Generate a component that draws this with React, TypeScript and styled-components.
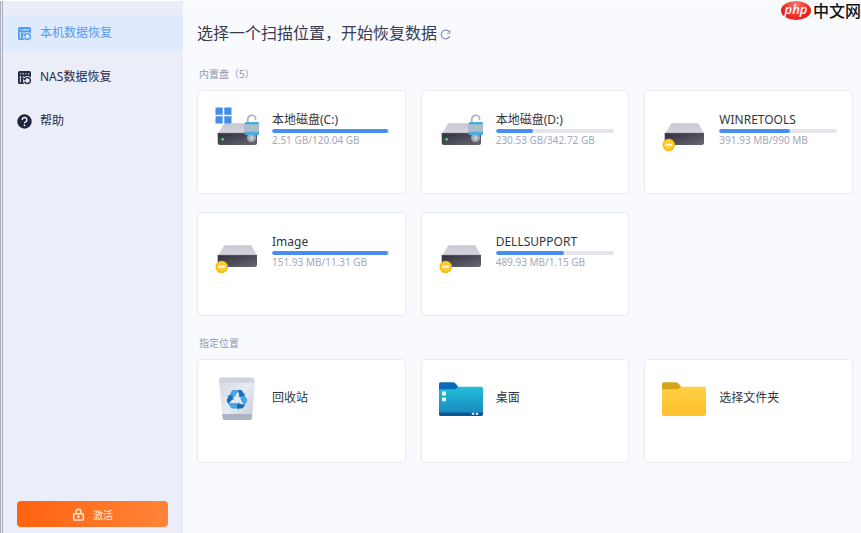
import React from 'react';
import styled, { createGlobalStyle } from 'styled-components';

const GlobalStyle = createGlobalStyle`
  *, *::before, *::after { box-sizing: border-box; }
  body {
    margin: 0;
    background: #f9fafe;
    color: #363a4a;
    font-family: "Noto Sans", "Noto Sans CJK SC", sans-serif;
    font-size: 12px;
  }
  button { font: inherit; color: inherit; }
`;

const Page = styled.div`
  position: relative;
  display: flex;
  min-height: 100vh;
  border-top: 1px solid #ffffff;
`;

const Sidebar = styled.aside`
  display: flex;
  flex-direction: column;
  justify-content: space-between;
  flex: 0 0 183px;
  padding: 14px 0 6px;
  background: #ebedf9;
  border-left: 3px double #a9adbb;
`;

const NavList = styled.nav`
  display: flex;
  flex-direction: column;
  gap: 8px;
`;

const NavItem = styled.a<{ $active?: boolean }>`
  display: flex;
  align-items: center;
  gap: 8px;
  height: 36px;
  padding: 0 14px;
  line-height: 18px;
  text-decoration: none;
  color: ${(p) => (p.$active ? '#559cf0' : '#272b44')};
  background: ${(p) => (p.$active ? '#dfeafd' : 'transparent')};
`;

const ActivateButton = styled.button`
  display: flex;
  align-items: center;
  justify-content: center;
  gap: 8px;
  height: 26px;
  margin: 0 15px 0 14px;
  padding: 0;
  border: 0;
  border-radius: 4px;
  color: #ffeadb;
  font-size: 10px;
  background: linear-gradient(90deg, #ff620f, #ff8438);
`;

const Main = styled.main`
  flex: 1;
  min-width: 0;
  padding: 20px 8px 16px 14px;
`;

const TitleRow = styled.header`
  display: flex;
  align-items: center;
  gap: 3px;
`;

const Title = styled.h1`
  margin: 0;
  font-size: 16px;
  font-weight: 400;
  line-height: 24px;
  color: #373b4f;
`;

const IconButton = styled.button`
  display: flex;
  padding: 2px 0 0;
  border: 0;
  background: none;
  color: #8d91b4;
`;

const SectionLabel = styled.h2`
  margin: 0 0 8px 2px;
  font-size: 10px;
  font-weight: 400;
  line-height: 15px;
  color: #9498ae;
`;

const Section = styled.section`
  margin-top: 20px;

  &:first-of-type { margin-top: 22px; }
`;

const CardGrid = styled.div`
  display: grid;
  grid-template-columns: repeat(3, minmax(0, 1fr));
  gap: 18px 15px;
`;

const Card = styled.button`
  display: flex;
  align-items: flex-start;
  gap: 11px;
  min-height: 104px;
  padding: 14px 14px 14px 15px;
  text-align: left;
  background: #ffffff;
  border: 1px solid #e9ebf3;
  border-radius: 4px;
`;

const CardText = styled.span`
  display: flex;
  flex-direction: column;
  flex: 1;
  min-width: 0;
  max-width: 118px;
  padding-top: 6px;
`;

const PlaceText = styled(CardText)`
  padding-top: 15px;
`;

const Name = styled.span`
  line-height: 18px;
  white-space: nowrap;
  color: #34363e;
`;

const Track = styled.span`
  display: block;
  height: 4px;
  border-radius: 2px;
  background: #e4e6ec;
  overflow: hidden;
`;

const Fill = styled.span`
  display: block;
  height: 4px;
  border-radius: 2px;
  background: #4a8df0;
`;

const Usage = styled.span`
  font-size: 10px;
  line-height: 14px;
  white-space: nowrap;
  color: #a4a7ba;
`;

const SiteMark = styled.div`
  position: absolute;
  top: -1px;
  right: 0;
  display: flex;
  align-items: center;
  gap: 2px;
  color: #111111;
  font-family: "Noto Sans CJK SC", sans-serif;
  font-size: 16px;
  font-weight: 500;
  line-height: 20px;
`;

const PhpBadge = styled.span`
  display: flex;
  justify-content: center;
  width: 30px;
  height: 19px;
  border-radius: 50%;
  background: radial-gradient(ellipse at 50% 15%, #ff7468, #e8211c 70%);
  color: #ffffff;
  font-family: "Noto Sans", sans-serif;
  font-size: 13px;
  font-style: italic;
  line-height: 17px;
`;

const Svg = styled.svg`
  display: block;
  flex: none;
`;

const RestoreIcon = ({ nas }: { nas?: boolean }) => (
  <Svg width="15" height="15" viewBox="0 0 15 15" fill="none" aria-hidden="true">
    <path d="M2.5 1h10Q14 1 14 2.5V7.4L10 6.2 6.3 9.5 7 14H2.5Q1 14 1 12.5V2.5Q1 1 2.5 1Z" fill="currentColor" />
    <path d={nas ? 'M3 3.8h1.3M5.6 3.8H7M8.3 3.8h1.3M11 3.8h1.3' : 'M3 3.8h1.3M5.6 3.8h6.6'} stroke="#ebedf9" strokeWidth="1" />
    <path d="M3.4 6v6.3M5.4 7h1.8" stroke="#ebedf9" strokeWidth="1" />
    <circle cx="10.4" cy="10.3" r="4.4" fill={nas ? '#ebedf9' : '#dfeafd'} />
    <path d="M7.6 9.4a3 3 0 1 1 0 2.2" stroke="currentColor" strokeWidth="1.5" />
    <path d="M6.6 7.4v2.8h2.8Z" fill="currentColor" />
  </Svg>
);

const HelpIcon = () => (
  <Svg width="15" height="15" viewBox="0 0 15 15" fill="none" aria-hidden="true">
    <circle cx="7.5" cy="7.5" r="7.2" fill="#20253f" />
    <path d="M5.2 5.9a2.35 2.35 0 1 1 3.5 2C7.8 8.3 7.5 8.5 7.5 9.3" stroke="#fff" strokeWidth="1.4" />
    <circle cx="7.5" cy="11.3" r=".9" fill="#fff" />
  </Svg>
);

const LockIcon = () => (
  <Svg width="13" height="13" viewBox="0 0 13 13" fill="none" stroke="currentColor" aria-hidden="true">
    <path d="M4 5.7V3.8a2.5 2.5 0 0 1 5 0v1.9" strokeWidth="1.5" />
    <rect x="1.7" y="5.7" width="9.6" height="6.2" rx=".7" strokeWidth="1.5" />
    <path d="M6.5 7.5v2.7M5.3 8.9h2.4" strokeWidth="1.2" />
  </Svg>
);

const RefreshIcon = () => (
  <Svg width="11" height="11" viewBox="0 0 11 11" fill="none" aria-hidden="true">
    <path d="M9.4 3.2A4.4 4.4 0 1 0 9.8 7" stroke="currentColor" strokeWidth="1.2" />
    <path d="M9.9 1.3v3H7" stroke="currentColor" strokeWidth="1" />
  </Svg>
);

type DriveKind = 'system' | 'unlocked' | 'reserved';

const DriveIcon = ({ kind, id }: { kind: DriveKind; id: string }) => (
  <Svg width="48" height="48" viewBox="0 0 48 48" fill="none" aria-hidden="true">
    <defs>
      <linearGradient id={`${id}-top`} x1="0" y1="0" x2="0" y2="1">
        <stop stopColor="#c8c9d2" />
        <stop offset="1" stopColor="#d5d5dd" />
      </linearGradient>
      <linearGradient id={`${id}-front`} x1="0" y1="0" x2="1" y2="1">
        <stop stopColor="#30303c" />
        <stop offset="1" stopColor="#686873" />
      </linearGradient>
    </defs>
    <path d="M10.8 19.3Q11.5 18.2 13 18.2H36.5Q38 18.2 39 19.5L44 28.5H5Z" fill={`url(#${id}-top)`} />
    <path d="M4.7 28H44V37.5Q44 40 41.5 40H7.2Q4.7 40 4.7 37.5Z" fill={`url(#${id}-front)`} />
    <path d="M5 28.3H43.7" stroke="#5b5c67" strokeWidth=".7" />
    {kind === 'system' && <path d="M2.5 2.5h7.2v7.2H2.5ZM11.3 2.5h7.2v7.2h-7.2ZM2.5 11.2h7.2v7.2H2.5ZM11.3 11.2h7.2v7.2h-7.2Z" fill="#438ee9" />}
    {kind === 'reserved' ? (
      <>
        <circle cx="8.7" cy="40" r="6.2" fill="#f9bd17" />
        <circle cx="8.7" cy="39.8" r="4.7" fill="#fdcf32" />
        <path d="M5.4 39.8h6.6" stroke="#fff8df" strokeWidth="2" />
      </>
    ) : (
      <>
        <circle cx="9.7" cy="34.2" r="1.5" fill="#47cf58" />
        <path d="M34.8 18.2V14.2a4 4 0 0 1 7.7-1.4v2.4" stroke="#a9b3be" strokeWidth="1.6" />
        <circle cx="38.5" cy="32.6" r="4.5" fill="#a7aeb7" />
        <rect x="31.7" y="17" width="14.3" height="13" rx="1" fill="#4aaadd" />
        <path d="M31.7 19.3H46V26.8H31.7Z" fill="#aebdca" />
        <path d="M38.5 30.8v3.7M37 33h3" stroke="#d8dee2" strokeWidth="1" />
      </>
    )}
  </Svg>
);

const BinIcon = () => (
  <Svg width="48" height="48" viewBox="0 0 48 48" fill="none" aria-hidden="true">
    <defs>
      <linearGradient id="bin-body" x1="0" y1="0" x2="1" y2="1">
        <stop stopColor="#d1d7e1" />
        <stop offset=".5" stopColor="#e7ebf3" />
        <stop offset="1" stopColor="#c2cad8" />
      </linearGradient>
    </defs>
    <path d="M6 6Q6 3.6 8 3.6H40Q42.3 3.6 42 6L39 44Q38.8 46 37 46H11.5Q9.7 46 9.5 44Z" fill="url(#bin-body)" />
    <path d="M8.5 3.7H39.5L42 8.5H6.2Z" fill="#ccd3de" />
    <path d="M9.2 40H39.2L38.8 44Q38.7 46 37 46H11.5Q9.8 46 9.6 44Z" fill="#adb3c2" />
    {[0, 120, 240].map((angle) => (
      <g key={angle} transform={`translate(24 25.6) rotate(${angle})`}>
        <path d="M-7.6-4.4L-5.4-8.5Q-4.8-9.5-3.6-9.5H2.2L-.6-5.6-3-1.8Z" fill="#48a3ec" />
        <path d="M.8-9.5H3.4Q4.8-9.5 5.5-8.2L6.8-5.9 8.4-6.4 6.2-2 1-3 2.4-4Z" fill="#176db7" />
      </g>
    ))}
  </Svg>
);

const FolderIcon = ({ desktop }: { desktop?: boolean }) => {
  const id = desktop ? 'folder-desktop' : 'folder-pick';
  return (
    <Svg width="48" height="48" viewBox="0 0 48 48" fill="none" aria-hidden="true">
      <defs>
        <linearGradient id={id} x1="0" y1="0" x2="0" y2="1">
          <stop stopColor={desktop ? '#21bed8' : '#ffd044'} />
          <stop offset="1" stopColor={desktop ? '#1b83bd' : '#ffc02a'} />
        </linearGradient>
      </defs>
      <path d="M2 10Q2 8.3 3.8 8.3H16Q17.8 8.3 19 10L21.7 13.5V19H2Z" fill={desktop ? '#0869b9' : '#d2a51b'} />
      <path d="M2 15.2H17.3Q18.7 15.2 20 13.8L21.2 12.7H44Q46 12.7 46 14.7V40Q46 42 44 42H4Q2 42 2 40Z" fill={`url(#${id})`} />
      {desktop && (
        <>
          <path d="M2 38.5H46V40Q46 42 44 42H4Q2 42 2 40Z" fill="#0a5995" />
          <path d="M5 17.6h4V21.5H5ZM5 23.5h4v3.7H5ZM34.8 38.8h2.4v2h-2.4ZM38.8 38.8h2.4v2h-2.4Z" fill="#e3faff" />
        </>
      )}
    </Svg>
  );
};

const drives: { id: string; name: string; usage: string; percent: number; kind: DriveKind }[] = [
  { id: 'drive-c', name: '本地磁盘(C:)', usage: '2.51 GB/120.04 GB', percent: 98, kind: 'system' },
  { id: 'drive-d', name: '本地磁盘(D:)', usage: '230.53 GB/342.72 GB', percent: 32, kind: 'unlocked' },
  { id: 'drive-win', name: 'WINRETOOLS', usage: '391.93 MB/990 MB', percent: 60, kind: 'reserved' },
  { id: 'drive-image', name: 'Image', usage: '151.93 MB/11.31 GB', percent: 98, kind: 'reserved' },
  { id: 'drive-dell', name: 'DELLSUPPORT', usage: '489.93 MB/1.15 GB', percent: 58, kind: 'reserved' },
];

const places = [
  { name: '回收站', icon: <BinIcon /> },
  { name: '桌面', icon: <FolderIcon desktop /> },
  { name: '选择文件夹', icon: <FolderIcon /> },
];

export default function App() {
  return (
    <Page lang="zh-CN">
      <GlobalStyle />
      <Sidebar>
        <NavList>
          <NavItem href="#local" $active aria-current="page"><RestoreIcon />本机数据恢复</NavItem>
          <NavItem href="#nas"><RestoreIcon nas />NAS数据恢复</NavItem>
          <NavItem href="#help"><HelpIcon />帮助</NavItem>
        </NavList>
        <ActivateButton type="button"><LockIcon />激活</ActivateButton>
      </Sidebar>
      <Main>
        <TitleRow>
          <Title>选择一个扫描位置，开始恢复数据</Title>
          <IconButton type="button" aria-label="刷新"><RefreshIcon /></IconButton>
        </TitleRow>
        <Section>
          <SectionLabel>内置盘（5）</SectionLabel>
          <CardGrid>
            {drives.map((d) => (
              <Card type="button" key={d.id}>
                <DriveIcon kind={d.kind} id={d.id} />
                <CardText>
                  <Name>{d.name}</Name>
                  <Track><Fill style={{ width: `${d.percent}%` }} /></Track>
                  <Usage>{d.usage}</Usage>
                </CardText>
              </Card>
            ))}
          </CardGrid>
        </Section>
        <Section>
          <SectionLabel>指定位置</SectionLabel>
          <CardGrid>
            {places.map((p) => (
              <Card type="button" key={p.name}>
                {p.icon}
                <PlaceText><Name>{p.name}</Name></PlaceText>
              </Card>
            ))}
          </CardGrid>
        </Section>
      </Main>
      <SiteMark><PhpBadge>php</PhpBadge>中文网</SiteMark>
    </Page>
  );
}
